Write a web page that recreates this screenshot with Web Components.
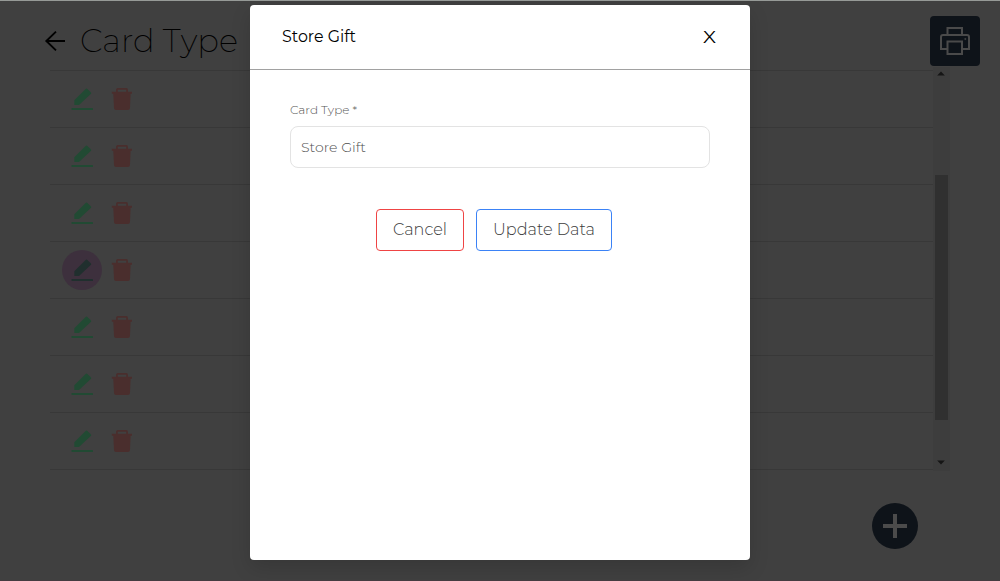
<!DOCTYPE html>
<html lang="en">
<head>
<meta charset="utf-8">
<title>Card Type</title>
<style>
html,body{margin:0;height:100%;overflow:hidden;background:#404040}
body{font-family:Montserrat,Inter,"Open Sans",sans-serif;color:#000}
</style>
</head>
<body>
<card-page></card-page>
<script>
const define = (name, html, setup) => {
  const t = document.createElement('template');
  t.innerHTML = html;
  customElements.define(name, class extends HTMLElement {
    connectedCallback() {
      if (this.shadowRoot) return;
      this.attachShadow({mode: 'open'}).append(t.content.cloneNode(true));
      if (setup) setup(this, this.shadowRoot);
    }
  });
};

/* A label whose glyphs are widened to a given measure. */
define('wide-text', `
<style>:host{display:block;white-space:nowrap}span{display:inline-block;transform-origin:0 50%}</style>
<span><slot></slot></span>`, (el, root) => {
  const span = root.querySelector('span'), w = +el.getAttribute('width');
  const natural = span.offsetWidth ? span.getBoundingClientRect().width : w;
  span.style.transform = `scaleX(${w / natural})`;
  el.style.width = w + 'px';
});

define('action-row', `
<style>
:host{display:flex;box-sizing:border-box;height:57px;border-bottom:1px solid #383838;align-items:center;padding-left:12px}
.b{width:40px;height:40px;border-radius:50%;display:flex;align-items:center;justify-content:center;color:#214a33}
:host([active]) .edit{background:#3d303d;color:#202f2e}
.del{color:#4a2e2d}
svg{display:block}
</style>
<div class="b edit"><svg width="24" height="24" viewBox="0 0 24 24" fill="currentColor"><path d="M4.300 18V13.300L15.900 1.700q.6-.5 1.200 0L21 5.600q.5.6 0 1.200L9 18z"/><rect x="1.500" y="21" width="21.500" height="2" rx=".6"/></svg></div>
<div class="b del"><svg width="24" height="24" viewBox="0 0 24 24" fill="currentColor"><path fill-rule="evenodd" d="M1.800 4.800h4.200V2.700Q6 .9 7.800 .9h8.400Q18 .9 18 2.700v2.100h4v1.900h-1.400L20 21q-.1 1.900-2 1.900H6q-1.900 0-2-1.900L3.300 6.700H1.800zM7.800 4.800h8.400V2.700H7.800z"/></svg></div>`);

define('scroll-bar', `
<style>
:host{display:flex;flex-direction:column;width:17px;background:#3d3d3d;box-sizing:border-box;align-items:center;padding:4px 1px 6px 0}
.thumb{width:13px;height:245px;margin-top:99px;background:#303030;margin-left:1px}
.down{margin-top:auto}svg{display:block;fill:#151515}
</style>
<svg width="8" height="5" viewBox="0 0 8 5"><path d="M.2 4.500 4 .5l3.800 4z"/></svg>
<div class="thumb"></div>
<svg class="down" width="8" height="5" viewBox="0 0 8 5"><path d="M.2.5h7.600L4 4.500z"/></svg>`);

define('page-header', `
<style>
:host{display:flex;height:70px;box-sizing:border-box;padding:15px 20px 0 43px;align-items:flex-start}
.back{margin-top:13px;display:block}
wide-text{font-size:32px;font-weight:200;line-height:50px;margin-left:13px}
.print{margin-left:auto;width:50px;height:50px;border-radius:4px;background:#0e1319;display:flex;align-items:center;justify-content:center;position:relative;z-index:1}
</style>
<svg class="back" width="24" height="24" viewBox="0 0 24 24" fill="none" stroke="#000" stroke-width="1.900"><path d="M22 12H3.300M13 2.600 3.300 12l9.700 9.400"/></svg>
<wide-text width="158">Card Type</wide-text>
<div class="print"><svg width="32" height="32" viewBox="0 0 32 32" fill="none" stroke="#4a4a4a" stroke-width="2"><path d="M8 24H2V12q0-2 2-2h24q2 0 2 2v12h-7M8.500 10V3h14.500v7"/><path d="M8.500 16.500h14.500v12.500H8.500z"/><circle cx="26.300" cy="14" r=".6" stroke-width="1"/></svg></div>`);

define('add-button', `
<style>:host{display:flex;width:46.500px;height:46.500px;border-radius:50%;background:#0e1319;align-items:center;justify-content:center}svg{display:block}</style>
<svg width="24" height="24"><path d="M12 0v24M0 12h24" stroke="#4b4b4b" stroke-width="4"/></svg>`);

define('outline-button', `
<style>:host{display:flex;box-sizing:border-box;height:42px;padding:0 0 2px 16px;border:1px solid var(--line);border-radius:4px;align-items:center;font-size:16px;font-weight:300;color:#3c3c3c}</style>
<slot></slot>`);

define('edit-dialog', `
<style>
:host{position:absolute;left:250px;top:5px;width:500px;height:555px;background:#fff;border-radius:4px;box-shadow:0 8px 20px rgba(0,0,0,.14)}
header{display:flex;box-sizing:border-box;height:65px;border-bottom:1px solid #a1a1a1;padding:0 34px 1px 32px;align-items:center;justify-content:space-between}
header wide-text{font-size:16px;font-weight:400}
header .close{font-size:17px}
main{padding:31px 40px 0}
.label{font-size:12px;font-weight:300;line-height:17px;color:#555}
.input{box-sizing:border-box;height:42px;margin-top:8px;border:1px solid #e3e3e3;border-radius:8px;padding-left:10px;display:flex;align-items:center;font-size:14px;font-weight:300;color:#505050}
.actions{display:flex;gap:12px;margin:41px 0 0 86px}
</style>
<header><wide-text width="74">Store Gift</wide-text><wide-text class="close" width="13">X</wide-text></header>
<main>
<wide-text class="label" width="67">Card Type *</wide-text>
<div class="input"><wide-text width="65">Store Gift</wide-text></div>
<div class="actions">
<outline-button style="width:88px;--line:#ef4444"><wide-text width="54">Cancel</wide-text></outline-button>
<outline-button style="width:136px;--line:#3b82f6"><wide-text width="102">Update Data</wide-text></outline-button>
</div>
</main>`);

define('card-page', `
<style>
:host{display:flex;flex-direction:column;position:relative;width:1000px;height:581px;box-sizing:border-box;overflow:hidden;background:#404040;border-top:1px solid #969a97;border-bottom:1px solid #443c41}
page-header{flex:none}
.list{display:flex;margin:-4px 50px 0 50px;height:404px}
.rows{flex:1;margin-top:3px;border-top:1px solid #383838}
add-button{margin:31.500px 0 0 871.500px}
edit-dialog{top:4px}
</style>
<page-header></page-header>
<div class="list"><div class="rows"><action-row></action-row><action-row></action-row><action-row></action-row><action-row active></action-row><action-row></action-row><action-row></action-row><action-row></action-row></div><scroll-bar></scroll-bar></div>
<add-button></add-button>
<edit-dialog></edit-dialog>`);
</script>
</body>
</html>
